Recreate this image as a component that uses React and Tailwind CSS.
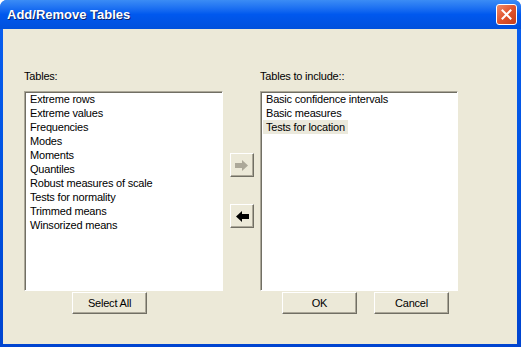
import { useState } from 'react';

const available = [
    'Extreme rows',
    'Extreme values',
    'Frequencies',
    'Modes',
    'Moments',
    'Quantiles',
    'Robust measures of scale',
    'Tests for normality',
    'Trimmed means',
    'Winsorized means',
];

const included = ['Basic confidence intervals', 'Basic measures', 'Tests for location'];

function ListBox({ items, selected, className }) {
    return (
        <div className={`border-t border-l border-t-[#aca899] border-l-[#aca899] border-b border-r border-b-white border-r-white bg-white shadow-[inset_1px_1px_0_#716f64] ${className}`}>
            <ul className="px-[2px]">
                {items.map((it) => (
                    <li
                        key={it}
                        className={`h-[14px] w-fit whitespace-nowrap px-[3px] leading-[14px] ${selected === it ? 'bg-[#ebe9dc]' : ''}`}
                    >
                        {it}
                    </li>
                ))}
            </ul>
        </div>
    );
}

function Button({ children, className = '' }) {
    return (
        <button
            type="button"
            className={`flex items-center justify-center border border-t-white border-l-white border-b-[#716f64] border-r-[#716f64] bg-[#ece9d8] shadow-[inset_-1px_-1px_0_#aca899] ${className}`}
        >
            {children}
        </button>
    );
}

function Arrow({ dir, color }) {
    return (
        <svg width="14" height="11" viewBox="0 0 14 11" className={dir === 'left' ? 'rotate-180' : ''}>
            <rect x="0" y="3" width="8" height="5" fill={color} />
            <polygon points="7,0 13,5.5 7,11" fill={color} />
        </svg>
    );
}

export default function App() {
    const [picked] = useState('Tests for location');

    return (
        <div
            className="flex h-[347px] w-[521px] flex-col overflow-hidden rounded-t-[7px] bg-gradient-to-b from-[#0a5ff0] via-[#0053e2] to-[#0044d0] text-[11px] tracking-[-0.2px] text-black"
            style={{ fontFamily: '"Liberation Sans", Arial, sans-serif' }}
        >
            <div className="flex h-[29px] shrink-0 items-center justify-between bg-gradient-to-b from-[#3b8cf5] via-[#0058ee] to-[#0050dc] pl-[7px] pr-[4px]">
                <span className="text-[13px] font-bold tracking-normal text-white [text-shadow:1px_1px_0_#0a246a]">
                    Add/Remove Tables
                </span>
                <button
                    type="button"
                    className="flex h-[21px] w-[21px] items-center justify-center rounded-[3px] border border-white bg-gradient-to-br from-[#f08a68] via-[#e0532c] to-[#c53f1a]"
                >
                    <svg width="11" height="11" viewBox="0 0 11 11">
                        <path d="M1.5 1.5 L9.5 9.5 M9.5 1.5 L1.5 9.5" stroke="white" strokeWidth="2" strokeLinecap="square" />
                    </svg>
                </button>
            </div>

            <div className="mb-[3px] ml-[3px] mr-[4px] flex flex-1 gap-[6px] bg-[#ece9d8] pl-[21px] pt-[40px]">
                <div className="flex flex-col">
                    <div className="h-[14px] leading-[14px]">Tables:</div>
                    <ListBox items={available} className="mt-[8px] h-[200px] w-[199px]" />
                    <Button className="ml-[48px] mt-[1px] h-[22px] w-[75px]">Select All</Button>
                </div>

                <div className="flex flex-col gap-[27px] pl-[1px] pt-[84px]">
                    <Button className="h-[24px] w-[24px]">
                        <Arrow dir="right" color="#aca899" />
                    </Button>
                    <Button className="h-[24px] w-[24px]">
                        <Arrow dir="left" color="#000" />
                    </Button>
                </div>

                <div className="flex flex-col">
                    <div className="h-[14px] leading-[14px]">Tables to include::</div>
                    <ListBox items={included} selected={picked} className="mt-[8px] h-[200px] w-[198px]" />
                    <div className="ml-[22px] mt-[1px] flex gap-[17px]">
                        <Button className="h-[22px] w-[75px]">OK</Button>
                        <Button className="h-[22px] w-[75px]">Cancel</Button>
                    </div>
                </div>
            </div>
        </div>
    );
}
